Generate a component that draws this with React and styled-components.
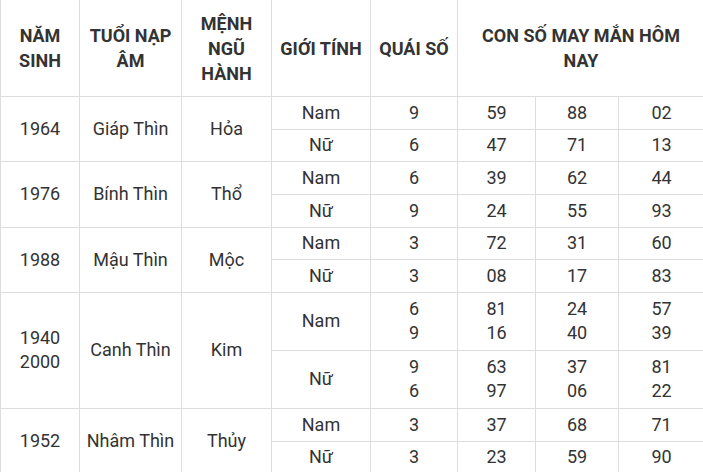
import React from "react";
import styled, {createGlobalStyle} from "styled-components";

const GlobalStyle = createGlobalStyle`
  html, body {
    margin: 0;
    padding: 0;
    background: #fff;
    overflow: hidden;
  }
  body {
    font-family: Roboto, "Noto Sans", Arial, sans-serif;
    color: #333;
  }
`;

const data = [
  {
    year: ["1964"],
    tuoi: "Giáp Thìn",
    menh: "Hỏa",
    rows: [
      {g: "Nam", q: ["9"], n: [["59"], ["88"], ["02"]]},
      {g: "Nữ", q: ["6"], n: [["47"], ["71"], ["13"]]},
    ],
  },
  {
    year: ["1976"],
    tuoi: "Bính Thìn",
    menh: "Thổ",
    rows: [
      {g: "Nam", q: ["6"], n: [["39"], ["62"], ["44"]]},
      {g: "Nữ", q: ["9"], n: [["24"], ["55"], ["93"]]},
    ],
  },
  {
    year: ["1988"],
    tuoi: "Mậu Thìn",
    menh: "Mộc",
    rows: [
      {g: "Nam", q: ["3"], n: [["72"], ["31"], ["60"]]},
      {g: "Nữ", q: ["3"], n: [["08"], ["17"], ["83"]]},
    ],
  },
  {
    year: ["1940", "2000"],
    tuoi: "Canh Thìn",
    menh: "Kim",
    rows: [
      {g: "Nam", q: ["6", "9"], n: [["81", "16"], ["24", "40"], ["57", "39"]]},
      {g: "Nữ", q: ["9", "6"], n: [["63", "97"], ["37", "06"], ["81", "22"]]},
    ],
  },
  {
    year: ["1952"],
    tuoi: "Nhâm Thìn",
    menh: "Thủy",
    rows: [
      {g: "Nam", q: ["3"], n: [["37"], ["68"], ["71"]]},
      {g: "Nữ", q: ["3"], n: [["23"], ["59"], ["90"]]},
    ],
  },
];

const widths = [79, 102, 90, 99, 87, 78, 83, 86];

const Lines = ({items}) =>
  items.map((t, i) => (
    <React.Fragment key={i}>
      {i > 0 && <br />}
      {t}
    </React.Fragment>
  ));

const App = () => {
  return (
    <Wrap>
      <GlobalStyle />
      <Table>
        <colgroup>
          {widths.map((w, i) => (
            <col key={i} style={{width: w}} />
          ))}
        </colgroup>
        <thead>
          <tr>
            <Th>NĂM<br />SINH</Th>
            <Th>TUỔI NẠP<br />ÂM</Th>
            <Th>MỆNH<br />NGŨ<br />HÀNH</Th>
            <Th>GIỚI TÍNH</Th>
            <Th>QUÁI SỐ</Th>
            <Th colSpan={3}>CON SỐ MAY MẮN HÔM<br />NAY</Th>
          </tr>
        </thead>
        <tbody>
          {data.map((grp) =>
            grp.rows.map((r, i) => {
              const tall = r.q.length > 1;
              return (
                <tr key={grp.year[0] + r.g}>
                  {i === 0 && (
                    <>
                      <Td rowSpan={2}>
                        <Lines items={grp.year} />
                      </Td>
                      <Td rowSpan={2}>{grp.tuoi}</Td>
                      <Td rowSpan={2}>{grp.menh}</Td>
                    </>
                  )}
                  <Td $tall={tall}>{r.g}</Td>
                  <Td $tall={tall}>
                    <Lines items={r.q} />
                  </Td>
                  {r.n.map((col, k) => (
                    <Td key={k} $tall={tall}>
                      <Lines items={col} />
                    </Td>
                  ))}
                </tr>
              );
            })
          )}
        </tbody>
      </Table>
    </Wrap>
  );
};

export default App;

const Wrap = styled.div`
  width: 703px;
  height: 472px;
  overflow: hidden;
`;
const Table = styled.table`
  width: 704px;
  table-layout: fixed;
  border-collapse: collapse;
  font-size: 18px;
`;
const Th = styled.th`
  height: 96px;
  padding: 0 2px;
  border: 1px solid #ddd;
  border-top: none;
  font-weight: 700;
  line-height: 25px;
  text-align: center;
  vertical-align: middle;
  color: #333;
`;
const Td = styled.td`
  height: ${(p) => (p.$tall ? "57px" : "31.67px")};
  padding: 0 2px;
  border: 1px solid #ddd;
  line-height: 24px;
  text-align: center;
  vertical-align: middle;
  color: #333;
`;
